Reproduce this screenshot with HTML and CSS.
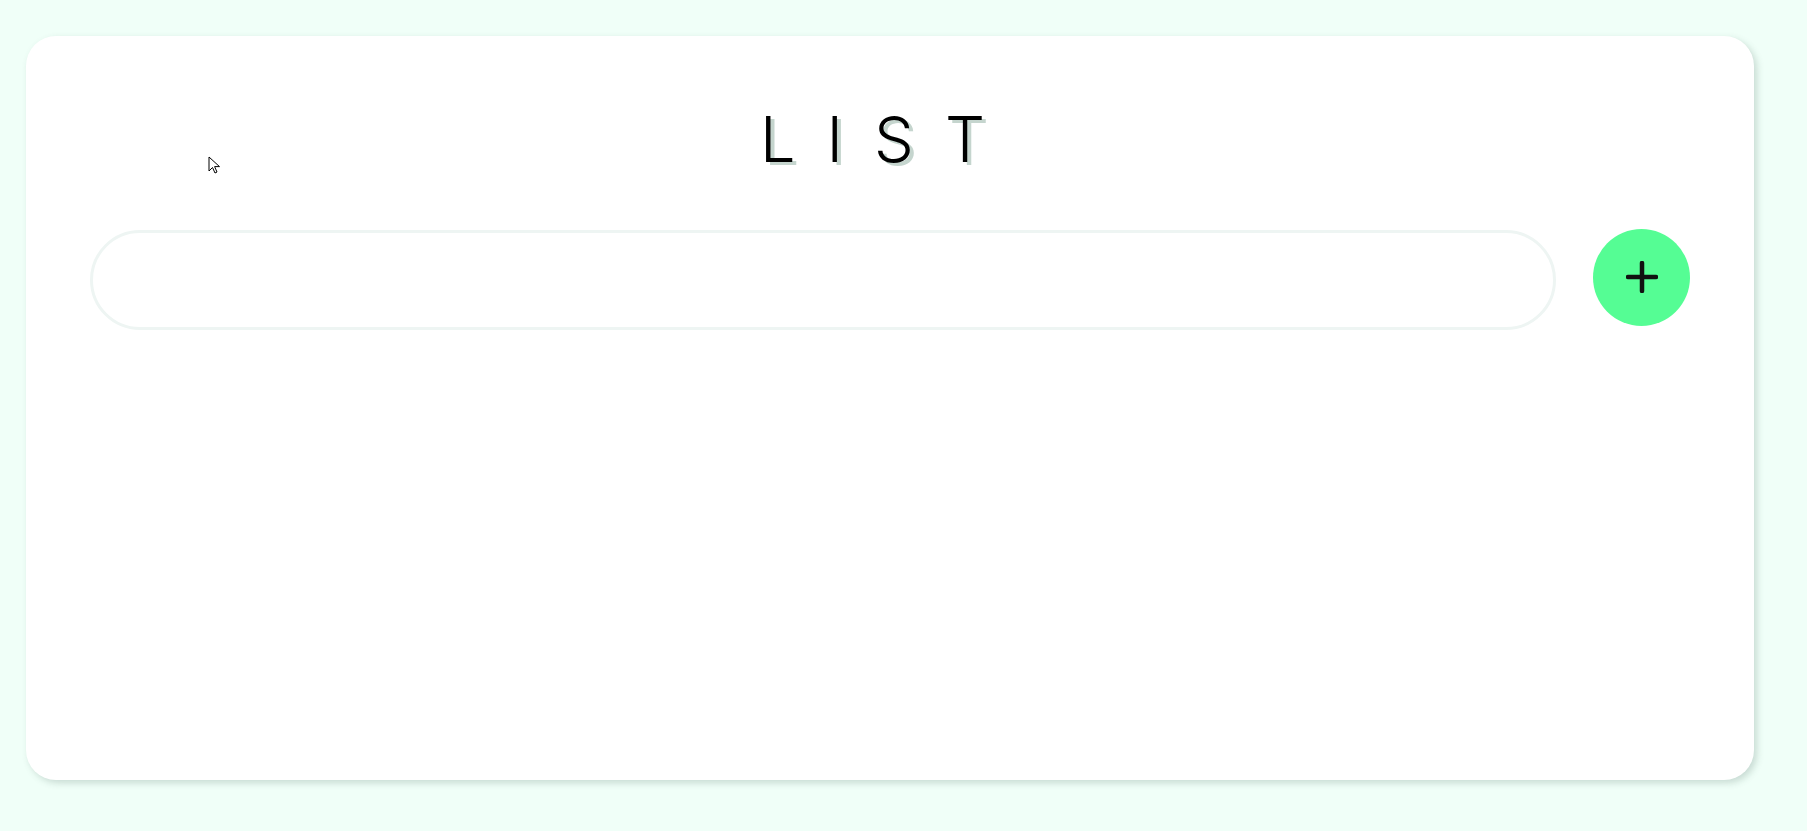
FILE: index.html
```html
<!DOCTYPE html>
<html>
<head>
<meta charset="utf-8">
<link rel="stylesheet" href="styles.css">
</head>
<body>
<div class="card">
  <h1 class="title">LIST</h1>
  <div class="row">
    <input class="field" type="text">
    <button class="add" aria-label="add">
      <svg width="32" height="32" viewBox="0 0 32 32"><path d="M16 2 V30 M2 16 H30" stroke="#111" stroke-width="4.5" stroke-linecap="round" fill="none"/></svg>
    </button>
  </div>
</div>
<svg class="cursor" width="14" height="20" viewBox="0 0 14 20"><path d="M1 1 L1 15 L4.5 11.5 L7 17 L9 16 L6.6 10.6 L11.5 10.6 Z" fill="#fff" stroke="#000" stroke-width="1" stroke-linejoin="round"/></svg>
</body>
</html>
```
FILE: styles.css
```css
html, body {
  margin: 0;
  padding: 0;
  background: #f0fff8;
  font-family: Inter, "Noto Sans", sans-serif;
}
body {
  width: 1807px;
  height: 831px;
  overflow: hidden;
  position: relative;
}
.card {
  margin: 36px 0 0 26px;
  width: 1728px;
  height: 744px;
  box-sizing: border-box;
  background: #fff;
  border-radius: 30px;
  box-shadow: 3px 3px 7px rgba(60, 90, 80, 0.22);
  padding: 65px 64px 0 64px;
}
.title {
  margin: 0;
  text-align: center;
  font-size: 63px;
  font-weight: 300;
  letter-spacing: 31px;
  line-height: 77px;
  color: #000;
  text-shadow: 4px 3px 0 #c5d5ce;
  padding-right: 4px;
}
.row {
  display: flex;
  align-items: center;
  gap: 37px;
  margin-top: 52px;
}
.field {
  flex: 1;
  height: 100px;
  box-sizing: border-box;
  border: 3px solid #eef5f3;
  border-radius: 50px;
  outline: none;
  background: #fff;
  padding: 0 40px;
  font-size: 24px;
  font-family: Inter, sans-serif;
}
.add {
  width: 97px;
  height: 97px;
  flex: none;
  border: none;
  border-radius: 50%;
  background: #55fd94;
  display: flex;
  align-items: center;
  justify-content: center;
  padding: 0;
  margin-top: -6px;
}
.cursor {
  position: absolute;
  left: 208px;
  top: 156px;
}
```
